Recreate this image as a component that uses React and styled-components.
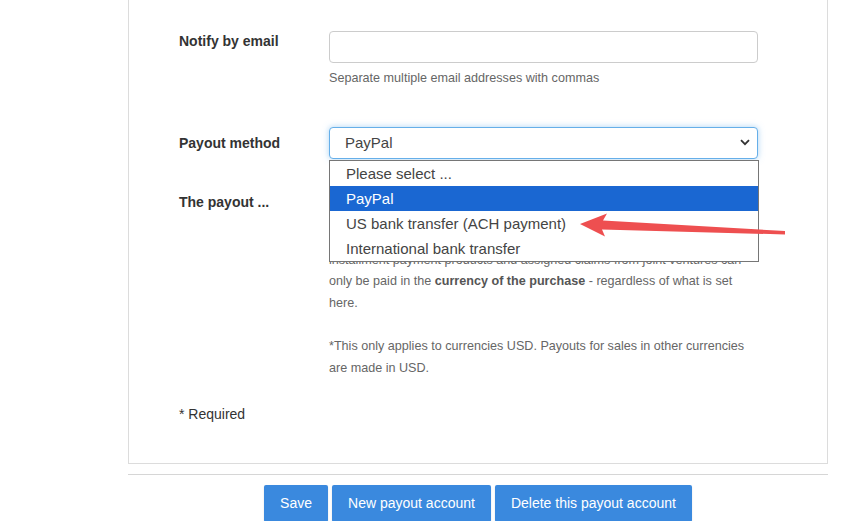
import styled, { createGlobalStyle } from "styled-components";

const Global = createGlobalStyle`
  html, body {
    margin: 0;
    padding: 0;
    background: #fff;
    font-family: "Liberation Sans", Arial, sans-serif;
    color: #333;
    overflow: hidden;
  }
`;

const Page = styled.div`
  position: relative;
  width: 864px;
  height: 521px;
  overflow: hidden;
  padding-left: 128px;
  box-sizing: border-box;
`;

const Panel = styled.div`
  width: 700px;
  box-sizing: border-box;
  border: 1px solid #dcdcdc;
  border-top: none;
  padding: 31px 0 39px 50px;
`;

const Row = styled.div`
  display: grid;
  grid-template-columns: 150px 429px;
  margin-bottom: ${(p) => p.gap || 0}px;
`;

const Label = styled.div`
  font-size: 14px;
  font-weight: bold;
  line-height: 20px;
  color: #333;
  padding-top: ${(p) => p.offset || 0}px;
  white-space: nowrap;
`;

const Field = styled.div`
  position: relative;
`;

const Input = styled.div`
  height: 32px;
  box-sizing: border-box;
  border: 1px solid #ccc;
  border-radius: 4px;
  background: #fff;
`;

const Select = styled.div`
  height: 32px;
  box-sizing: border-box;
  border: 1px solid ${(p) => (p.focused ? "#66afe9" : "#ccc")};
  border-radius: 4px;
  background: #fff;
  box-shadow: ${(p) =>
    p.focused ? "0 0 6px rgba(102, 175, 233, 0.55)" : "none"};
  display: flex;
  align-items: center;
  justify-content: space-between;
  padding: 0 7px 0 15px;
  font-size: 15px;
  color: #444;
`;

const Hint = styled.div`
  font-size: 12.6px;
  line-height: 21.5px;
  color: #666;
  margin-top: 5px;
  margin-bottom: 9px;
`;

const Note = styled.p`
  font-size: 12.6px;
  line-height: 21.5px;
  color: #666;
  white-space: nowrap;
  margin: ${(p) => (p.first ? "9.5px" : "22px")} 0 0;

  b {
    color: #555;
  }
`;

const Required = styled.div`
  font-size: 14px;
  line-height: 20px;
  color: #333;
  margin-top: 24.5px;
`;

const Options = styled.ul`
  position: absolute;
  z-index: 5;
  top: 33px;
  left: 0;
  width: 430px;
  box-sizing: border-box;
  margin: 0;
  padding: 0;
  list-style: none;
  background: #fff;
  border: 1px solid #767676;
`;

const Option = styled.li`
  height: 25px;
  line-height: 25px;
  padding-left: 16px;
  font-size: 15px;
  color: ${(p) => (p.active ? "#fff" : "#444")};
  background: ${(p) => (p.active ? "#1a67d2" : "transparent")};
`;

const Divider = styled.div`
  width: 700px;
  height: 1px;
  background: #d6d6d6;
  margin-top: 10px;
`;

const Actions = styled.div`
  width: 700px;
  display: flex;
  justify-content: center;
  gap: 4px;
  margin-top: 10px;
`;

const Button = styled.button`
  height: 37px;
  padding: 0 16px;
  border: none;
  border-radius: 2px;
  background: #3a89de;
  color: #fff;
  font-family: "Liberation Sans", Arial, sans-serif;
  font-size: 14px;
  box-shadow: 0 1px 2px rgba(0, 0, 0, 0.12);
`;

const Arrow = styled.svg`
  position: absolute;
  left: 0;
  top: 0;
  z-index: 10;
  pointer-events: none;
`;

const Chevron = () => (
  <svg width="10" height="7" viewBox="0 0 10 7">
    <path d="M1 1.2 L5 5.2 L9 1.2" fill="none" stroke="#333" strokeWidth="1.8" />
  </svg>
);

export default function App() {
  const options = [
    "Please select ...",
    "PayPal",
    "US bank transfer (ACH payment)",
    "International bank transfer",
  ];

  return (
    <Page>
      <Global />
      <Panel>
        <Row gap={28}>
          <Label>Notify by email</Label>
          <Field>
            <Input />
            <Hint>Separate multiple email addresses with commas</Hint>
          </Field>
        </Row>

        <Row gap={28}>
          <Label offset={6}>Payout method</Label>
          <Field>
            <Select focused>
              <span>PayPal</span>
              <Chevron />
            </Select>
            <Options>
              {options.map((o) => (
                <Option key={o} active={o === "PayPal"}>
                  {o}
                </Option>
              ))}
            </Options>
          </Field>
        </Row>

        <Row>
          <Label offset={5}>The payout ...</Label>
          <Field>
            <Select>
              <span />
              <Chevron />
            </Select>
            <Note first>
              Please note: payouts for sales of subscriptions,
              <br />
              installment payment products and assigned claims from joint ventures can
              <br />
              only be paid in the <b>currency of the purchase</b> - regardless of what is set
              <br />
              here.
            </Note>
            <Note>
              *This only applies to currencies USD. Payouts for sales in other currencies
              <br />
              are made in USD.
            </Note>
          </Field>
        </Row>

        <Required>* Required</Required>
      </Panel>

      <Divider />

      <Actions>
        <Button>Save</Button>
        <Button>New payout account</Button>
        <Button>Delete this payout account</Button>
      </Actions>

      <Arrow width="864" height="521" viewBox="0 0 864 521">
        <polygon
          points="580,224 607,213.5 603,220.5 785,231 785,234.5 602,229.5 605,236.5"
          fill="#ee4f50"
        />
      </Arrow>
    </Page>
  );
}
